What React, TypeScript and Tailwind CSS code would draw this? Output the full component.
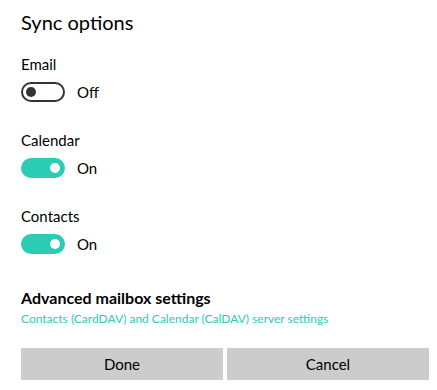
import React from 'react';

interface ToggleRowProps {
  label: string;
  on: boolean;
}

function ToggleRow({ label, on }: ToggleRowProps) {
  return (
    <div className="flex flex-col">
      <span className="text-[15px] leading-[20px] text-black">{label}</span>
      <div className="mt-[8px] flex items-center gap-[12px]">
        {on ? (
          <div className="flex h-[20px] w-[44px] items-center justify-end rounded-full bg-[#2ccbb3] pr-[5px]">
            <div className="h-[10px] w-[10px] rounded-full bg-white" />
          </div>
        ) : (
          <div className="flex h-[20px] w-[44px] items-center rounded-full border-2 border-[#333] pl-[3px]">
            <div className="h-[10px] w-[10px] rounded-full bg-[#333]" />
          </div>
        )}
        <span className="text-[15px] leading-[20px] text-black">{on ? 'On' : 'Off'}</span>
      </div>
    </div>
  );
}

export default function App() {
  return (
    <div
      className="h-[390px] w-[437px] bg-white pl-[21px] pr-[8px] pt-[8px]"
      style={{ fontFamily: 'Lato, "Noto Sans", sans-serif' }}
    >
      <h1 className="text-[20px] leading-[28px] text-black">Sync options</h1>
      <div className="mt-[18px] flex flex-col gap-[28px]">
        <ToggleRow label="Email" on={false} />
        <ToggleRow label="Calendar" on />
        <ToggleRow label="Contacts" on />
      </div>
      <div className="mt-[35px] flex flex-col">
        <span className="text-[16px] font-bold leading-[18px] text-black">Advanced mailbox settings</span>
        <span className="mt-[4px] text-[12px] leading-[16px] text-[#2ccbb3]">
          Contacts (CardDAV) and Calendar (CalDAV) server settings
        </span>
      </div>
      <div className="mt-[21px] flex gap-[4px]">
        <button className="h-[32px] flex-1 bg-[#cccccc] text-[15px] text-black">Done</button>
        <button className="h-[32px] flex-1 bg-[#cccccc] text-[15px] text-black">Cancel</button>
      </div>
    </div>
  );
}
